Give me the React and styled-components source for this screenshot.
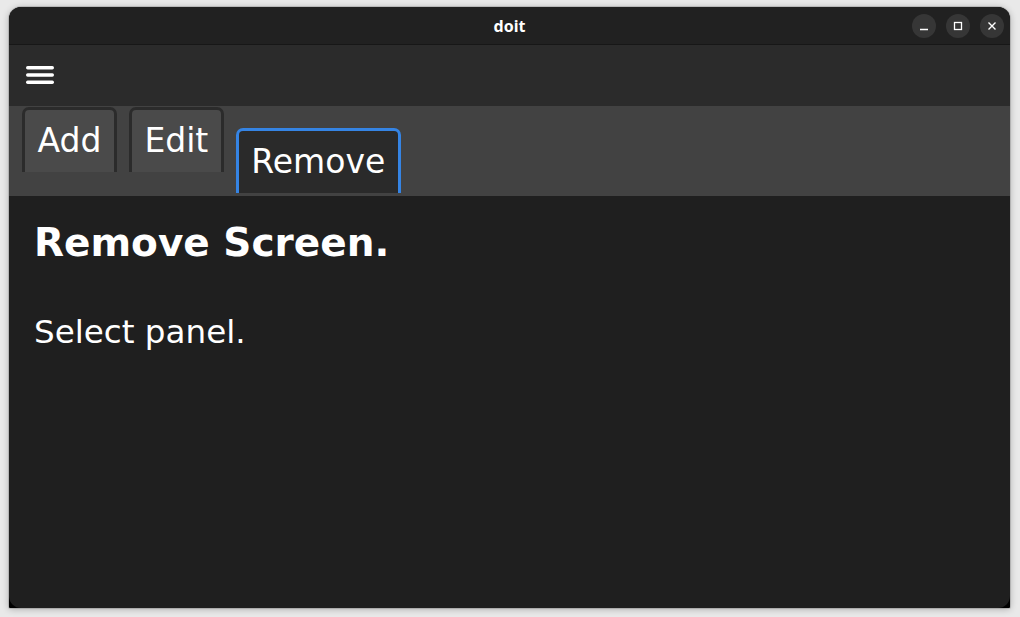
import React from "react";
import styled, { createGlobalStyle } from "styled-components";

const GlobalStyle = createGlobalStyle`
  html, body {
    margin: 0;
    padding: 0;
    background: #e9e9e9;
    font-family: "DejaVu Sans", "Noto Sans", sans-serif;
  }
`;

const Page = styled.div`
  padding: 7px 10px 9px 9px;
`;

const Window = styled.div`
  width: 1001px;
  height: 601px;
  display: flex;
  flex-direction: column;
  background: #000;
  border-radius: 12px 12px 1px 1px;
  overflow: hidden;
  box-shadow: 0 1px 7px rgba(0, 0, 0, 0.28), 0 0 0 1px rgba(0, 0, 0, 0.12);
`;

const TitleBar = styled.div`
  height: 37px;
  flex: none;
  display: grid;
  grid-template-columns: 1fr auto 1fr;
  align-items: center;
  background: #212121;
  border-bottom: 1px solid #171717;
`;

const Title = styled.div`
  grid-column: 2;
  color: #ffffff;
  font-family: "Noto Sans", "DejaVu Sans", sans-serif;
  font-weight: 700;
  font-size: 16px;
`;

const Controls = styled.div`
  grid-column: 3;
  justify-self: end;
  display: flex;
  gap: 10px;
  padding-right: 6px;
`;

const CtlButton = styled.div`
  width: 24px;
  height: 24px;
  border-radius: 50%;
  background: #363636;
  display: flex;
  align-items: center;
  justify-content: center;
`;

const Toolbar = styled.div`
  height: 61px;
  flex: none;
  display: flex;
  align-items: center;
  padding-left: 17px;
  background: #2b2b2b;
`;

const TabBar = styled.div`
  height: 90px;
  flex: none;
  box-sizing: border-box;
  display: flex;
  align-items: flex-start;
  gap: 12px;
  padding: 1px 0 0 13px;
  background: #424242;
`;

const Tab = styled.div`
  box-sizing: border-box;
  height: 65px;
  margin-top: ${(p) => (p.$active ? "21px" : "0")};
  padding: ${(p) => (p.$active ? "12px" : "12px")} 12.5px 0;
  border: 3px solid ${(p) => (p.$active ? "#3584e4" : "#2b2b2b")};
  border-bottom: none;
  border-radius: 7px 7px 0 0;
  background: ${(p) => (p.$active ? "#2a2a2a" : "#4a4a4a")};
  color: #ffffff;
  font-size: 33px;
  line-height: 1.164;
`;

const Content = styled.div`
  flex: 1;
  background: #1f1f1f;
  border-radius: 0 0 12px 12px;
  padding: 24px 25px;
  color: #ffffff;
`;

const Heading = styled.h1`
  margin: 0;
  font-size: 39px;
  font-weight: 700;
  line-height: 1.2;
`;

const Text = styled.p`
  margin: 46px 0 0;
  font-size: 32.6px;
  line-height: 1.2;
`;

const Hamburger = () => (
  <svg width="28" height="19" viewBox="0 0 28 19">
    <g stroke="#ffffff" strokeWidth="3.4" strokeLinecap="round">
      <line x1="1.7" y1="1.7" x2="26.3" y2="1.7" />
      <line x1="1.7" y1="9" x2="26.3" y2="9" />
      <line x1="1.7" y1="16.3" x2="26.3" y2="16.3" />
    </g>
  </svg>
);

export default function App() {
  return (
    <>
      <GlobalStyle />
      <Page>
        <Window>
          <TitleBar>
            <Title>doit</Title>
            <Controls>
              <CtlButton>
                <svg width="10" height="10" viewBox="0 0 10 10">
                  <line x1="1" y1="8.5" x2="9" y2="8.5" stroke="#fff" strokeWidth="1.3" />
                </svg>
              </CtlButton>
              <CtlButton>
                <svg width="10" height="10" viewBox="0 0 10 10">
                  <rect x="1.5" y="1.5" width="7" height="7" fill="none" stroke="#fff" strokeWidth="1.3" />
                </svg>
              </CtlButton>
              <CtlButton>
                <svg width="10" height="10" viewBox="0 0 10 10">
                  <path d="M1.5 1.5 L8.5 8.5 M8.5 1.5 L1.5 8.5" stroke="#fff" strokeWidth="1.4" />
                </svg>
              </CtlButton>
            </Controls>
          </TitleBar>
          <Toolbar>
            <Hamburger />
          </Toolbar>
          <TabBar>
            <Tab>Add</Tab>
            <Tab>Edit</Tab>
            <Tab $active>Remove</Tab>
          </TabBar>
          <Content>
            <Heading>Remove Screen.</Heading>
            <Text>Select panel.</Text>
          </Content>
        </Window>
      </Page>
    </>
  );
}
